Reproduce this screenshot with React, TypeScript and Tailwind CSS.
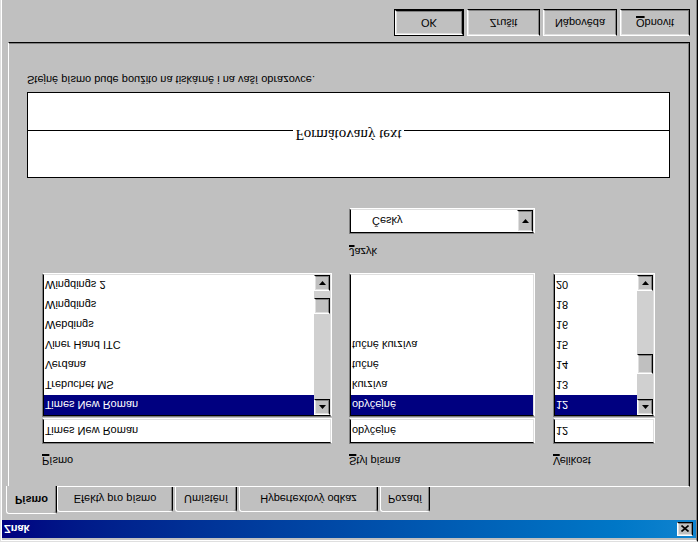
import type { ReactNode } from 'react';

// Win98 style bevels
const raisedOuter = 'border border-t-white border-l-white border-r-black border-b-black';
const raisedInner = 'border border-t-[#dfdfdf] border-l-[#dfdfdf] border-r-[#808080] border-b-[#808080]';
const sunkenOuter = 'border border-t-[#808080] border-l-[#808080] border-r-white border-b-white';
const sunkenInner = 'border border-t-black border-l-black border-r-[#dfdfdf] border-b-[#dfdfdf]';

function Raised({ className = '', children }: { className?: string; children?: ReactNode }) {
  return (
    <div className={`${raisedOuter} bg-[#c0c0c0] ${className}`}>
      <div className={`${raisedInner} h-full w-full flex items-center justify-center`}>{children}</div>
    </div>
  );
}

function Sunken({ className = '', children }: { className?: string; children?: ReactNode }) {
  return (
    <div className={`${sunkenOuter} ${className}`}>
      <div className={`${sunkenInner} h-full w-full bg-white flex overflow-hidden`}>{children}</div>
    </div>
  );
}

function Arrow({ up }: { up?: boolean }) {
  return (
    <svg width="7" height="4" viewBox="0 0 7 4">
      {up ? <path d="M3.5 0 L7 4 L0 4 Z" fill="#000" /> : <path d="M0 0 L7 0 L3.5 4 Z" fill="#000" />}
    </svg>
  );
}

function Scrollbar({ offset, thumb }: { offset: string; thumb: string }) {
  return (
    <div className="w-[16px] h-full flex flex-col bg-[#d0d0d0] shrink-0">
      <Raised className="h-[16px] shrink-0">
        <Arrow up />
      </Raised>
      <div className={`${offset} shrink-0`} />
      <Raised className={`${thumb} shrink-0`} />
      <div className="flex-1" />
      <Raised className="h-[16px] shrink-0">
        <Arrow />
      </Raised>
    </div>
  );
}

// underlined access key letter
function Acc({ c }: { c: string }) {
  return <span className="underline decoration-[2px] underline-offset-[1px]">{c}</span>;
}

function Label({ acc, rest }: { acc: string; rest: string }) {
  return (
    <div className="h-[13px] leading-[13px] whitespace-nowrap">
      <Acc c={acc} />
      {rest}
    </div>
  );
}

function Rows({ items, selected }: { items: string[]; selected: number }) {
  return (
    <div className="flex-1 flex flex-col">
      {items.map((it, i) => (
        <div
          key={it}
          className={`h-[20px] shrink-0 flex items-center pl-[1px] whitespace-nowrap ${
            i === selected ? 'bg-[#000080] text-white' : ''
          }`}
        >
          {it}
        </div>
      ))}
    </div>
  );
}

function Tab({ label, w, active }: { label: string; w: string; active?: boolean }) {
  if (active) {
    return (
      <div
        className={`${w} h-[28px] -ml-[2px] -mb-px bg-[#c0c0c0] border-l border-t border-r border-l-white border-t-white border-r-black rounded-t-[3px] shadow-[inset_-1px_0_0_#808080] flex items-center justify-center font-bold pb-[1px]`}
      >
        {label}
      </div>
    );
  }
  return (
    <div
      className={`${w} h-[25px] ml-[2px] first:ml-0 bg-[#c0c0c0] border-l border-t border-r border-l-white border-t-white border-r-black rounded-t-[3px] shadow-[inset_-1px_0_0_#808080] flex items-center justify-center whitespace-nowrap`}
    >
      {label}
    </div>
  );
}

function Button({ children, w, def }: { children: ReactNode; w: string; def?: boolean }) {
  if (def) {
    return (
      <div className={`${w} h-[27px] border border-black`}>
        <Raised className="h-full w-full">{children}</Raised>
      </div>
    );
  }
  return <Raised className={`${w} h-[27px]`}>{children}</Raised>;
}

export default function App() {
  return (
    <div className="w-[698px] h-[542px] overflow-hidden -scale-y-100 bg-[#c0c0c0] text-black text-[11px] font-['Liberation_Sans',Arial,sans-serif]">
      <div className="h-[544px] border border-t-[#dfdfdf] border-l-[#dfdfdf] border-r-black border-b-black">
        <div className="h-full border border-t-white border-l-white border-r-[#808080] border-b-[#808080] pt-[2px]">
          {/* title bar */}
          <div className="h-[18px] bg-linear-to-r from-[#000080] to-[#1084d0] flex items-center justify-between">
            <span className="pl-[2px] text-white font-bold">Znak</span>
            <Raised className="w-[16px] h-[14px] mr-[3px]">
              <svg width="8" height="7" viewBox="0 0 8 7">
                <path d="M0.5 0.5 L7.5 6.5 M7.5 0.5 L0.5 6.5" stroke="#000" strokeWidth="1.6" />
              </svg>
            </Raised>
          </div>

          <div className="px-[6px] pt-[6px]">
            {/* tabs */}
            <div className="flex items-end h-[27px] relative z-10">
              <Tab label="Písmo" w="w-[51px]" active />
              <div className="flex items-end">
                <Tab label="Efekty pro písmo" w="w-[116px]" />
                <Tab label="Umístění" w="w-[62px]" />
                <Tab label="Hypertextový odkaz" w="w-[139px]" />
                <Tab label="Pozadí" w="w-[50px]" />
              </div>
            </div>

            {/* tab panel */}
            <div className="h-[445px] border border-t-white border-l-white border-r-black border-b-black shadow-[inset_-1px_-1px_0_#808080]">
              <div className="flex pl-[33px] pt-[19px]">
                <div className="w-[290px] flex flex-col">
                  <Label acc="P" rest="ísmo" />
                  <Sunken className="h-[26px] mt-[10px]">
                    <div className="flex items-center pl-[1px]">Times New Roman</div>
                  </Sunken>
                  <Sunken className="h-[144px] mt-[1px]">
                    <Rows
                      items={['Times New Roman', 'Trebuchet MS', 'Verdana', 'Viner Hand ITC', 'Webdings', 'Wingdings', 'Wingdings 2']}
                      selected={0}
                    />
                    <Scrollbar offset="h-[85px]" thumb="h-[16px]" />
                  </Sunken>
                </div>

                <div className="w-[186px] ml-[17px] flex flex-col">
                  <Label acc="S" rest="tyl písma" />
                  <Sunken className="h-[26px] mt-[10px]">
                    <div className="flex items-center pl-[1px]">obyčejné</div>
                  </Sunken>
                  <Sunken className="h-[144px] mt-[1px]">
                    <Rows items={['obyčejné', 'kurzíva', 'tučné', 'tučné kurzíva']} selected={0} />
                  </Sunken>
                  <div className="mt-[15px]">
                    <Label acc="J" rest="azyk" />
                  </div>
                  <Sunken className="h-[26px] mt-[11px]">
                    <div className="flex-1 flex items-center pl-[21px]">Česky</div>
                    <Raised className="w-[16px] h-full">
                      <Arrow />
                    </Raised>
                  </Sunken>
                </div>

                <div className="w-[102px] ml-[18px] flex flex-col">
                  <Label acc="V" rest="elikost" />
                  <Sunken className="h-[26px] mt-[10px]">
                    <div className="flex items-center pl-[1px]">12</div>
                  </Sunken>
                  <Sunken className="h-[144px] mt-[1px]">
                    <Rows items={['12', '13', '14', '15', '16', '18', '20']} selected={0} />
                    <Scrollbar offset="h-[25px]" thumb="h-[20px]" />
                  </Sunken>
                </div>
              </div>

              {/* preview */}
              <div className="pl-[18px] mt-[30px]">
                <div className="w-[643px] h-[86px] border border-black bg-white pt-[34px]">
                  <div className="flex items-baseline leading-[17px]">
                    <div className="flex-1 h-px bg-black" />
                    <span className="px-[2px] text-[15px] font-['Liberation_Serif','Times_New_Roman',serif]">
                      Formátovaný text
                    </span>
                    <div className="flex-1 h-px bg-black" />
                  </div>
                </div>
                <div className="mt-[6px] h-[13px] leading-[13px]">
                  Stejné písmo bude použito na tiskárně i na vaší obrazovce.
                </div>
              </div>
            </div>

            {/* buttons */}
            <div className="flex justify-end gap-[3px] mt-[6px]">
              <Button w="w-[70px]" def>
                OK
              </Button>
              <Button w="w-[73px]">Zrušit</Button>
              <Button w="w-[74px]">Nápověda</Button>
              <Button w="w-[70px]">
                <span>
                  <Acc c="O" />
                  bnovit
                </span>
              </Button>
            </div>
          </div>
        </div>
      </div>
    </div>
  );
}
